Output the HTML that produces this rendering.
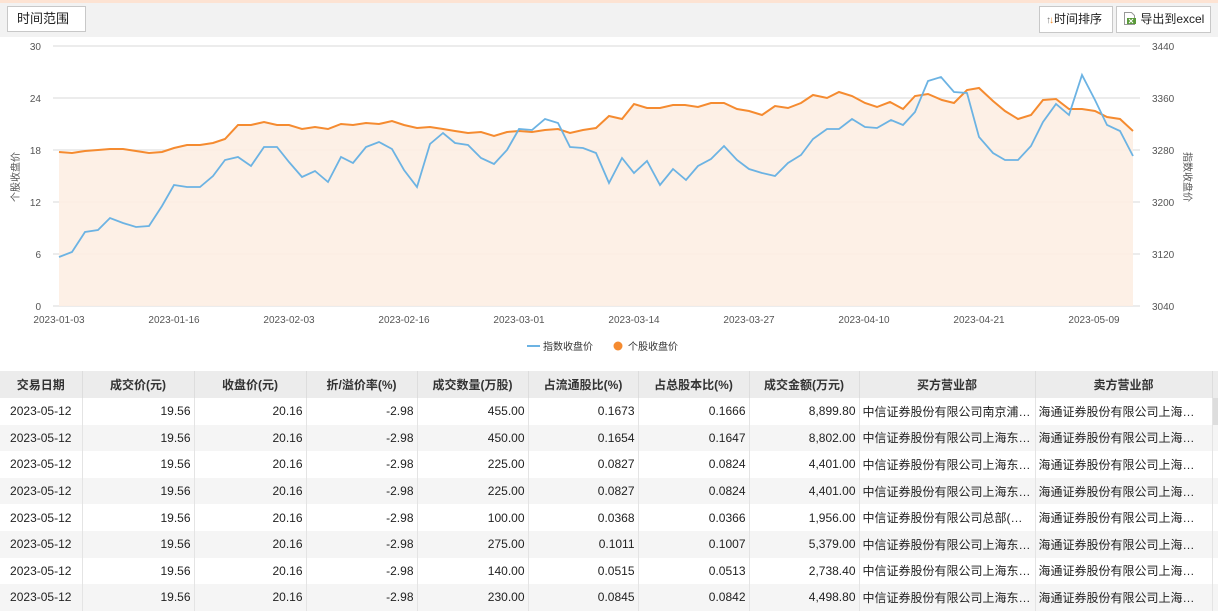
<!DOCTYPE html>
<html><head><meta charset="utf-8"><style>
*{margin:0;padding:0;box-sizing:border-box}
body{width:1218px;height:609px;overflow:hidden;background:#fff;font-family:"Liberation Sans","Noto Sans CJK SC",sans-serif;font-size:12px;color:#333;position:relative}
.top{position:absolute;left:0;top:0;width:1218px;height:3px;background:#fde3d3}
.bar{position:absolute;left:0;top:3px;width:1218px;height:34px;background:#f2f2f2}
.btn{position:absolute;background:#fff;border:1px solid #c8c8c8;font-size:12px;color:#222;line-height:24px}
table{position:absolute;left:0;top:371px;width:1218px;border-collapse:collapse;table-layout:fixed}
th{background:#ececec;height:27px;font-weight:bold;color:#333;border-right:1px solid #ddd;font-size:12px;text-align:center;overflow:hidden;white-space:nowrap}
td{height:26.6px;border-right:1px solid #e4e4e4;text-align:right;padding:0 3px;white-space:nowrap;overflow:hidden;color:#222}
td.l{text-align:left}
td.c{text-align:center}
tr.a td{background:#f5f5f5}
</style></head><body>
<div class="top"></div>
<div class="bar"></div>
<div class="btn" style="left:7px;top:6px;width:79px;height:26px;padding-left:9px;font-size:13px">时间范围</div>
<div class="btn" style="left:1039px;top:6px;width:74px;height:27px;padding-left:6px"><span style="color:#777;font-size:10px">↑</span><span style="color:#f08a24;font-size:10px;margin-left:-2px">↓</span>时间排序</div>
<div class="btn" style="left:1116px;top:6px;width:95px;height:27px;padding-left:6px"><svg width="14" height="13" style="vertical-align:-2px"><path d="M1.5 .5h7l3 3v9h-10z" fill="#fff" stroke="#999"/><rect x="4" y="6" width="9" height="6" fill="#5a9a3a"/><path d="M6 7l4 4M10 7l-4 4" stroke="#fff"/></svg> 导出到excel</div>
<svg style="position:absolute;left:0;top:37px" width="1218" height="334" viewBox="0 37 1218 334">
<g stroke="#e6e6e6" stroke-width="1.5"><line x1="53" y1="46" x2="1140" y2="46"/><line x1="53" y1="98" x2="1140" y2="98"/><line x1="53" y1="150" x2="1140" y2="150"/><line x1="53" y1="202" x2="1140" y2="202"/><line x1="53" y1="254" x2="1140" y2="254"/><line x1="53" y1="306" x2="1140" y2="306"/></g>
<polygon fill="#fdeee3" opacity="0.9" points="59,306 59,152 72,153 85,151 98,150 110,149 123,149 136,151 149,153 162,152 174,148 187,145 200,145 213,143 225,139 238,125 251,125 264,122 277,125 289,125 302,129 315,127 328,129 341,124 353,125 366,123 379,124 392,121 404,125 417,128 430,127 443,129 455,131 468,133 481,132 494,136 507,132 519,131 532,132 545,130 558,129 570,133 583,130 596,128 609,116 622,119 634,104 647,108 660,108 673,105 685,105 698,107 711,103 724,103 737,109 749,111 762,115 775,106 788,108 801,103 813,95 827,98 839,92 852,96 865,103 877,107 890,102 903,109 915,96 928,94 942,100 954,103 967,90 979,88 993,101 1005,111 1018,119 1031,115 1043,100 1056,99 1069,109 1082,109 1095,111 1107,117 1120,119 1133,131 1133,306"/>
<polyline fill="none" stroke="#f58b30" stroke-width="2" points="59,152 72,153 85,151 98,150 110,149 123,149 136,151 149,153 162,152 174,148 187,145 200,145 213,143 225,139 238,125 251,125 264,122 277,125 289,125 302,129 315,127 328,129 341,124 353,125 366,123 379,124 392,121 404,125 417,128 430,127 443,129 455,131 468,133 481,132 494,136 507,132 519,131 532,132 545,130 558,129 570,133 583,130 596,128 609,116 622,119 634,104 647,108 660,108 673,105 685,105 698,107 711,103 724,103 737,109 749,111 762,115 775,106 788,108 801,103 813,95 827,98 839,92 852,96 865,103 877,107 890,102 903,109 915,96 928,94 942,100 954,103 967,90 979,88 993,101 1005,111 1018,119 1031,115 1043,100 1056,99 1069,109 1082,109 1095,111 1107,117 1120,119 1133,131"/>
<polyline fill="none" stroke="#6cb3e3" stroke-width="1.8" points="59,257 72,252 85,232 98,230 110,218 123,223 136,227 149,226 162,206 174,185 187,187 200,187 213,176 225,160 238,157 251,166 264,147 277,147 289,162 302,177 315,171 328,182 341,157 353,163 366,147 379,142 392,149 404,170 417,187 430,144 443,133 455,143 468,145 481,158 494,164 507,150 519,129 532,130 545,119 558,123 570,147 583,148 596,153 609,183 622,158 634,173 647,161 660,185 673,169 686,180 698,166 711,159 724,146 737,160 749,169 762,173 775,176 788,163 801,155 813,139 827,129 839,129 852,119 865,127 877,128 891,120 903,125 915,112 928,81 941,77 954,92 967,93 979,137 993,153 1005,160 1018,160 1031,146 1043,122 1056,104 1069,115 1082,75 1095,100 1107,125 1120,131 1133,156"/>
<g font-size="10" fill="#555" text-anchor="end" font-family="Liberation Sans,sans-serif"><text x="41" y="50">30</text><text x="41" y="102">24</text><text x="41" y="154">18</text><text x="41" y="206">12</text><text x="41" y="258">6</text><text x="41" y="310">0</text></g>
<g font-size="10" fill="#555" font-family="Liberation Sans,sans-serif"><text x="1152" y="50">3440</text><text x="1152" y="102">3360</text><text x="1152" y="154">3280</text><text x="1152" y="206">3200</text><text x="1152" y="258">3120</text><text x="1152" y="310">3040</text></g>
<g font-size="10" fill="#555" text-anchor="middle" font-family="Liberation Sans,sans-serif"><text x="59" y="323">2023-01-03</text><text x="174" y="323">2023-01-16</text><text x="289" y="323">2023-02-03</text><text x="404" y="323">2023-02-16</text><text x="519" y="323">2023-03-01</text><text x="634" y="323">2023-03-14</text><text x="749" y="323">2023-03-27</text><text x="864" y="323">2023-04-10</text><text x="979" y="323">2023-04-21</text><text x="1094" y="323">2023-05-09</text></g>
<text x="0" y="0" font-size="10" fill="#555" text-anchor="middle" transform="translate(19,177) rotate(-90)">个股收盘价</text>
<text x="0" y="0" font-size="10" fill="#555" text-anchor="middle" transform="translate(1184,177) rotate(90)">指数收盘价</text>
<line x1="527" y1="346" x2="540" y2="346" stroke="#6cb3e3" stroke-width="2"/>
<text x="543" y="350" font-size="10" fill="#333">指数收盘价</text>
<circle cx="618" cy="346" r="4.5" fill="#f58b30"/>
<text x="628" y="350" font-size="10" fill="#333">个股收盘价</text>
</svg>
<table>
<colgroup><col style="width:82px"><col style="width:112px"><col style="width:112px"><col style="width:111px"><col style="width:111px"><col style="width:110px"><col style="width:111px"><col style="width:110px"><col style="width:176px"><col style="width:177px"><col style="width:6px"></colgroup>
<tr><th>交易日期</th><th>成交价(元)</th><th>收盘价(元)</th><th>折/溢价率(%)</th><th>成交数量(万股)</th><th>占流通股比(%)</th><th>占总股本比(%)</th><th>成交金额(万元)</th><th>买方营业部</th><th>卖方营业部</th><th></th></tr>
<tr><td class="c">2023-05-12</td><td>19.56</td><td>20.16</td><td>-2.98</td><td>455.00</td><td>0.1673</td><td>0.1666</td><td>8,899.80</td><td class="l">中信证券股份有限公司南京浦…</td><td class="l">海通证券股份有限公司上海…</td><td style="background:#ddd"></td></tr>
<tr class="a"><td class="c">2023-05-12</td><td>19.56</td><td>20.16</td><td>-2.98</td><td>450.00</td><td>0.1654</td><td>0.1647</td><td>8,802.00</td><td class="l">中信证券股份有限公司上海东…</td><td class="l">海通证券股份有限公司上海…</td><td></td></tr>
<tr><td class="c">2023-05-12</td><td>19.56</td><td>20.16</td><td>-2.98</td><td>225.00</td><td>0.0827</td><td>0.0824</td><td>4,401.00</td><td class="l">中信证券股份有限公司上海东…</td><td class="l">海通证券股份有限公司上海…</td><td></td></tr>
<tr class="a"><td class="c">2023-05-12</td><td>19.56</td><td>20.16</td><td>-2.98</td><td>225.00</td><td>0.0827</td><td>0.0824</td><td>4,401.00</td><td class="l">中信证券股份有限公司上海东…</td><td class="l">海通证券股份有限公司上海…</td><td></td></tr>
<tr><td class="c">2023-05-12</td><td>19.56</td><td>20.16</td><td>-2.98</td><td>100.00</td><td>0.0368</td><td>0.0366</td><td>1,956.00</td><td class="l">中信证券股份有限公司总部(…</td><td class="l">海通证券股份有限公司上海…</td><td></td></tr>
<tr class="a"><td class="c">2023-05-12</td><td>19.56</td><td>20.16</td><td>-2.98</td><td>275.00</td><td>0.1011</td><td>0.1007</td><td>5,379.00</td><td class="l">中信证券股份有限公司上海东…</td><td class="l">海通证券股份有限公司上海…</td><td></td></tr>
<tr><td class="c">2023-05-12</td><td>19.56</td><td>20.16</td><td>-2.98</td><td>140.00</td><td>0.0515</td><td>0.0513</td><td>2,738.40</td><td class="l">中信证券股份有限公司上海东…</td><td class="l">海通证券股份有限公司上海…</td><td></td></tr>
<tr class="a"><td class="c">2023-05-12</td><td>19.56</td><td>20.16</td><td>-2.98</td><td>230.00</td><td>0.0845</td><td>0.0842</td><td>4,498.80</td><td class="l">中信证券股份有限公司上海东…</td><td class="l">海通证券股份有限公司上海…</td><td></td></tr>
</table>
</body></html>
